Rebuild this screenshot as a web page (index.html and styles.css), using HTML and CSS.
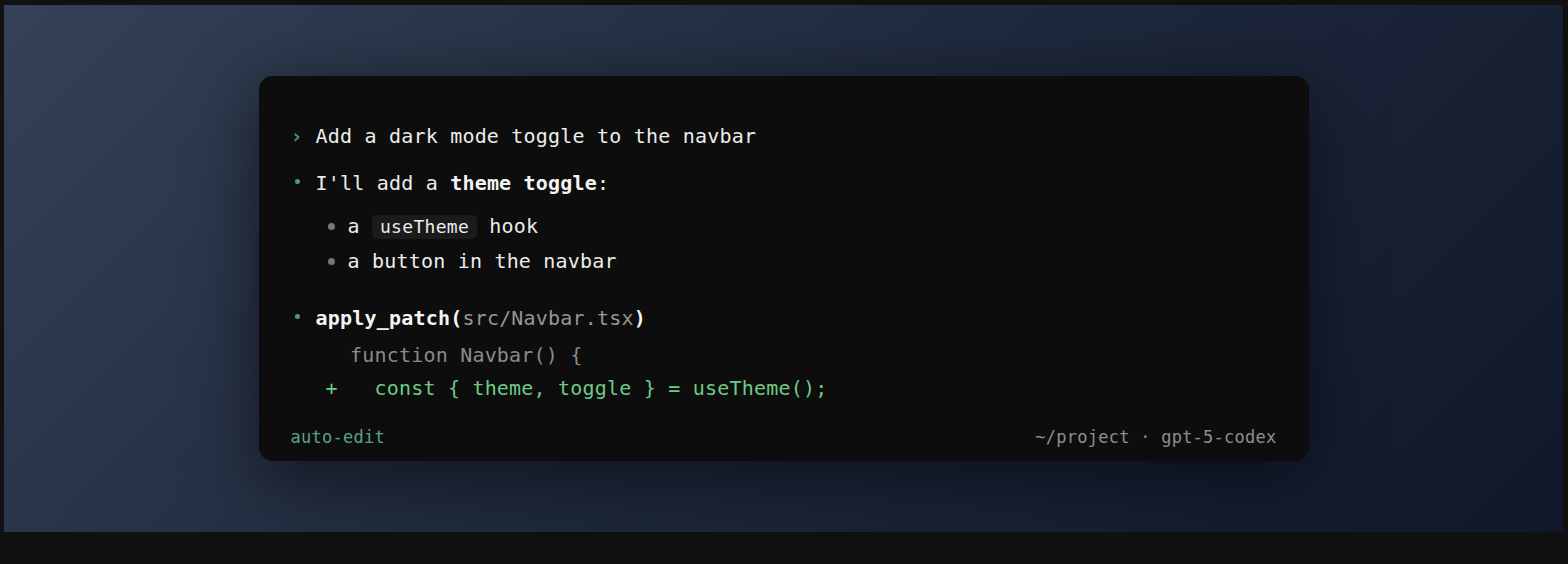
FILE: index.html
```html
<!DOCTYPE html>
<html lang="en">
<head>
<meta charset="utf-8">
<title>Codex terminal</title>
<link rel="stylesheet" href="styles.css">
</head>
<body>
<div class="frame">
  <div class="stage">
    <div class="card">
      <div class="row prompt">
        <span class="mark mark-prompt">›</span>
        <span class="text">Add a dark mode toggle to the navbar</span>
      </div>
      <div class="row reply">
        <span class="mark"><span class="bullet"></span></span>
        <span class="text">I'll add a <strong>theme toggle</strong>:</span>
      </div>
      <ul class="sublist">
        <li>a <code class="inline">useTheme</code> hook</li>
        <li>a button in the navbar</li>
      </ul>
      <div class="row tool">
        <span class="mark"><span class="bullet"></span></span>
        <span class="text"><strong class="fn">apply_patch(</strong><span class="arg">src/Navbar.tsx</span><strong class="fn">)</strong></span>
      </div>
      <div class="diff">
        <div class="line ctx">  function Navbar() {</div>
        <div class="line add">+   const { theme, toggle } = useTheme();</div>
      </div>
      <div class="footer">
        <span class="mode">auto-edit</span>
        <span class="meta">~/project · gpt-5-codex</span>
      </div>
    </div>
  </div>
</div>
</body>
</html>
```
FILE: styles.css
```css
* { box-sizing: border-box; }

html, body {
  margin: 0;
  padding: 0;
  background: #111111;
}

.frame {
  width: 1568px;
  height: 564px;
  padding: 5px 5px 32px 4px;
  background: #111111;
}

.stage {
  height: 527px;
  background: linear-gradient(135deg, #344156 0%, #1f293d 50%, #10172a 100%);
  display: flex;
  align-items: center;
  justify-content: center;
}

.card {
  width: 1050px;
  height: 385px;
  background: #0d0d0d;
  border-radius: 14px;
  box-shadow: 0 16px 70px rgba(0, 0, 0, 0.55);
  padding: 43px 32px 12px 32px;
  display: flex;
  flex-direction: column;
  font-family: "DejaVu Sans Mono", "Liberation Mono", monospace;
  font-size: 20px;
  letter-spacing: 0.2px;
  color: #ececec;
}

.row {
  display: flex;
  align-items: baseline;
  line-height: 35px;
}

.mark {
  flex: none;
  width: 25px;
  display: inline-flex;
  align-items: center;
}

.mark-prompt {
  color: #3e9577;
  font-weight: 700;
  display: inline-block;
}

.bullet {
  display: inline-block;
  width: 5px;
  height: 5px;
  border-radius: 50%;
  background: #4a9d84;
  margin-left: 4px;
  transform: translateY(-6px);
}

.reply { margin-top: 12px; }

strong { font-weight: 700; color: #f4f4f4; }

.sublist {
  list-style: none;
  margin: 8px 0 0 0;
  padding: 0 0 0 37px;
  line-height: 35px;
}

.sublist li {
  display: flex;
  align-items: center;
  white-space: pre;
}

.sublist li::before {
  content: "";
  flex: none;
  width: 7px;
  height: 7px;
  border-radius: 50%;
  background: #777777;
  margin-right: 13px;
}

.inline {
  font-family: inherit;
  font-size: 18px;
  letter-spacing: 0.3px;
  background: #1b1b1b;
  border-radius: 5px;
  padding: 1px 8px;
  color: #ececec;
  line-height: 22px;
}

.tool { margin-top: 22px; }

.fn { font-weight: 700; }
.arg { color: #969696; }

.diff {
  margin: 3px 0 0 35px;
  line-height: 33px;
}

.line { white-space: pre; }

.ctx { color: #8a8a8a; }
.add { color: #6ccb86; }

.footer {
  margin-top: auto;
  display: flex;
  justify-content: space-between;
  font-size: 17px;
  letter-spacing: 0.25px;
  line-height: 24px;
}

.mode { color: #5aa385; }
.meta { color: #8e8e8e; }
```
